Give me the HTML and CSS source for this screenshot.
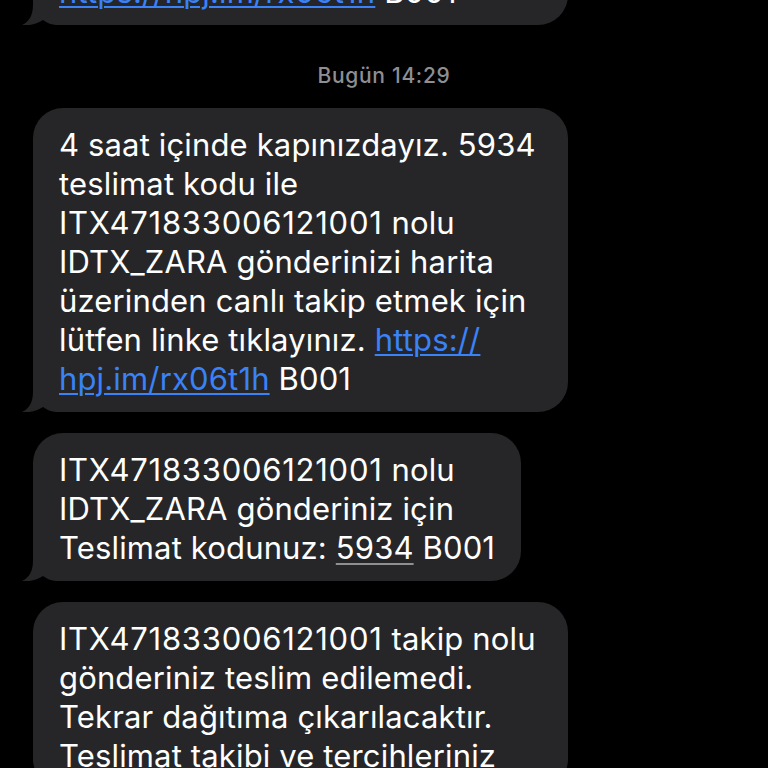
FILE: index.html
```html
<!DOCTYPE html>
<html lang="tr">
<head>
<meta charset="utf-8">
<title>Mesajlar</title>
<link rel="stylesheet" href="styles.css">
</head>
<body>
<main class="thread">
  <div class="bubble wide first">
    <span class="line">lütfen linke tıklayınız.</span>
    <span class="line"><a class="link" href="#">https://hpj.im/rx06t1h</a> B001</span>
    <svg class="tail" viewBox="0 0 50 36" width="50" height="36" aria-hidden="true"><path d="M12,0 L12,16 C12,26 8,33 1,36 C8,37 16,35 22,31 C26,34 31,36 38,36 L50,36 L50,0 Z"/></svg>
  </div>

  <div class="stamp">Bugün 14:29</div>

  <div class="bubble wide">
    <span class="line">4 saat içinde kapınızdayız. 5934</span>
    <span class="line">teslimat kodu ile</span>
    <span class="line"><span class="num">ITX471833006121001</span> nolu</span>
    <span class="line">IDTX_ZARA gönderinizi harita</span>
    <span class="line">üzerinden canlı takip etmek için</span>
    <span class="line">lütfen linke tıklayınız. <a class="link" href="#">https://</a></span>
    <span class="line"><a class="link" href="#">hpj.im/rx06t1h</a> B001</span>
    <svg class="tail" viewBox="0 0 50 36" width="50" height="36" aria-hidden="true"><path d="M12,0 L12,16 C12,26 8,33 1,36 C8,37 16,35 22,31 C26,34 31,36 38,36 L50,36 L50,0 Z"/></svg>
  </div>

  <div class="bubble">
    <span class="line"><span class="num">ITX471833006121001</span> nolu</span>
    <span class="line">IDTX_ZARA gönderiniz için</span>
    <span class="line">Teslimat kodunuz: <span class="code">5934</span> B001</span>
    <svg class="tail" viewBox="0 0 50 36" width="50" height="36" aria-hidden="true"><path d="M12,0 L12,16 C12,26 8,33 1,36 C8,37 16,35 22,31 C26,34 31,36 38,36 L50,36 L50,0 Z"/></svg>
  </div>

  <div class="bubble wide">
    <span class="line"><span class="num">ITX471833006121001</span> takip nolu</span>
    <span class="line">gönderiniz teslim edilemedi.</span>
    <span class="line">Tekrar dağıtıma çıkarılacaktır.</span>
    <span class="line">Teslimat takibi ve tercihleriniz</span>
  </div>
</main>
</body>
</html>
```

FILE: styles.css
```css
html, body {
  margin: 0;
  padding: 0;
  background: #000;
  height: 768px;
  overflow: hidden;
}

.thread {
  display: flex;
  flex-direction: column;
  align-items: flex-start;
  padding-left: 33px;
  font-family: "Inter", "Liberation Sans", sans-serif;
}

.bubble {
  position: relative;
  isolation: isolate;
  box-sizing: border-box;
  background: #262628;
  color: #fff;
  border-radius: 30px;
  padding: 17px 26px 14px 26px;
  font-size: 31px;
  line-height: 39px;
  letter-spacing: 0.15px;
  display: flex;
  flex-direction: column;
  margin-bottom: 21px;
}

.bubble.wide {
  width: 535px;
}

.bubble.first {
  margin-top: -84px;
  margin-bottom: 0;
}

.line {
  white-space: nowrap;
}

.num {
  letter-spacing: 0.75px;
}

.link {
  color: #3a82f7;
  text-decoration: underline;
  text-decoration-thickness: 2px;
  text-underline-offset: 3px;
}

.code {
  text-decoration: underline;
  text-decoration-color: #8e8e93;
  text-decoration-thickness: 2px;
  text-underline-offset: 4px;
}

.tail {
  position: absolute;
  left: -12px;
  bottom: 0;
  z-index: -1;
  fill: #262628;
}

.stamp {
  align-self: center;
  margin: 39px 0 20px 0;
  margin-left: -33px;
  color: #8e8e93;
  font-size: 21px;
  line-height: 24px;
  font-weight: 500;
  letter-spacing: 0.7px;
}
```
